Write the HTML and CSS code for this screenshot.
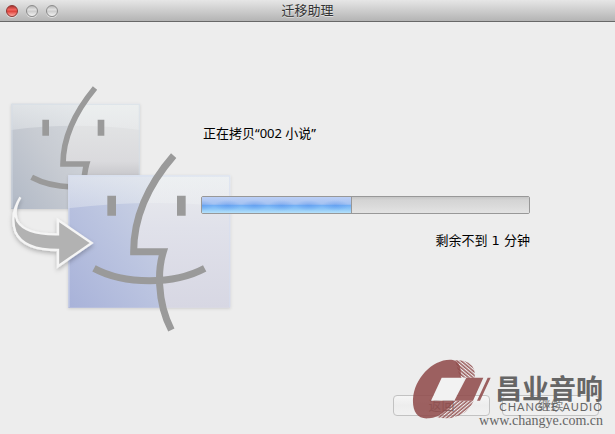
FILE: index.html
```html
<!DOCTYPE html>
<html lang="zh-CN">
<head>
    <meta charset="UTF-8">
    <meta name="viewport" content="width=device-width, initial-scale=1.0">
    <title>迁移助理</title>
    <link rel="stylesheet" href="styles.css">
</head>
<body>
    <div class="window">
        <header class="titlebar">
            <div class="window-controls">
                <button type="button" class="light light-close" aria-label="关闭"></button>
                <button type="button" class="light" aria-label="最小化"></button>
                <button type="button" class="light" aria-label="缩放"></button>
            </div>
            <h1 class="window-title">迁移助理</h1>
        </header>

        <main class="content">
            <svg class="artwork" viewBox="0 0 720 795" aria-hidden="true">
                <defs>
                    <linearGradient id="oldFace" x1="0" y1="1" x2="1" y2="0">
                        <stop offset="0" stop-color="#b1b9c6"/>
                        <stop offset="0.5" stop-color="#c7cbd2"/>
                        <stop offset="1" stop-color="#d6dade"/>
                    </linearGradient>
                    <linearGradient id="oldSide" x1="0" y1="0" x2="0" y2="1">
                        <stop offset="0" stop-color="#e6e8e8"/>
                        <stop offset="0.55" stop-color="#dadadd"/>
                        <stop offset="0.7" stop-color="#c5c5c9"/>
                    </linearGradient>
                    <linearGradient id="newFace" x1="0" y1="1" x2="1" y2="0">
                        <stop offset="0" stop-color="#a8b2d9"/>
                        <stop offset="0.5" stop-color="#bbc4e0"/>
                        <stop offset="1" stop-color="#d0d7e6"/>
                    </linearGradient>
                    <linearGradient id="newSide" x1="0" y1="0" x2="0" y2="1">
                        <stop offset="0" stop-color="#e9ebee"/>
                        <stop offset="0.4" stop-color="#e0e1ea"/>
                        <stop offset="1" stop-color="#d7d7e3"/>
                    </linearGradient>
                    <linearGradient id="gloss" x1="0" y1="0" x2="0" y2="1">
                        <stop offset="0" stop-color="#f0f3f4" stop-opacity="0.6"/>
                        <stop offset="1" stop-color="#f0f3f4" stop-opacity="0.35"/>
                    </linearGradient>
                    <filter id="shadow" x="-20%" y="-20%" width="140%" height="140%">
                        <feDropShadow dx="0" dy="3" stdDeviation="5" flood-color="#000000" flood-opacity="0.13"/>
                    </filter>
                    <filter id="arrowShadow" x="-20%" y="-20%" width="140%" height="140%">
                        <feDropShadow dx="0" dy="7" stdDeviation="6" flood-color="#000000" flood-opacity="0.25"/>
                    </filter>
                </defs>

                <!-- old computer -->
                <g filter="url(#shadow)">
                    <path d="M34 86H420V402H34Z" fill="url(#oldSide)"/>
                    <path d="M34 86H248Q190 170 188 268H260L252 402H34Z" fill="url(#oldFace)"/>
                    <path d="M34 86H420V165Q225 140 34 165Z" fill="url(#gloss)"/>
                    <path d="M36 400V88H418V400" fill="none" stroke="#d6dde6" stroke-width="4" opacity="0.6"/>
                </g>
                <g fill="none" stroke="#9a9a9a" stroke-width="17">
                    <path d="M285 39Q189 155 189 267H260Q252 294 251 340"/>
                    <path d="M95 307Q145 334 215 336"/>
                    <path d="M137 134V182M303 134V182" stroke-width="20"/>
                </g>

                <!-- new computer -->
                <g filter="url(#shadow)">
                    <path d="M205 301H691V698H205Z" fill="url(#newSide)"/>
                    <path d="M205 301H480Q405 410 401 529H492Q478 570 480 620Q482 665 490 698H205Z" fill="url(#newFace)"/>
                    <path d="M205 301H691V395Q450 370 205 400Z" fill="url(#gloss)"/>
                    <path d="M207 696V303H689V696" fill="none" stroke="#d6ddf0" stroke-width="4" opacity="0.6"/>
                </g>
                <g fill="none" stroke="#9a9a9a" stroke-width="21">
                    <path d="M521 242Q401 380 401 530H490Q476 575 479 630Q483 705 514 765"/>
                    <path d="M282 580Q350 617 448 617Q545 617 614 580"/>
                    <path d="M335 362V422M544 362V422" stroke-width="26"/>
                </g>

                <!-- transfer arrow -->
                <path d="M61 367Q38 405 52 438Q77 480 174 478V435L275 504L174 574V525Q70 525 46 470Q29 418 61 367Z" fill="#b2b2b2" stroke="#f5f5f5" stroke-width="7" filter="url(#arrowShadow)"/>
            </svg>

            <section class="transfer">
                <label class="status" for="copyProgress">正在拷贝“002 小说”</label>
                <progress class="progress" id="copyProgress" value="46" max="100"></progress>
                <p class="remaining">剩余不到 1 分钟</p>
            </section>
        </main>

        <footer class="actions">
            <button type="button" class="btn" disabled>返回</button>
            <button type="button" class="btn" disabled>继续</button>
        </footer>

        <div class="watermark">
            <svg class="watermark-logo" viewBox="21 25 240 183" aria-hidden="true">
                <defs>
                    <pattern id="hatch" width="8" height="8" patternUnits="userSpaceOnUse" patternTransform="rotate(40)">
                        <path d="M0 3H8" stroke="#914c4c" stroke-width="4"/>
                    </pattern>
                    <pattern id="hatchLow" width="8" height="8" patternUnits="userSpaceOnUse" patternTransform="rotate(-40)">
                        <path d="M0 3H8" stroke="#914c4c" stroke-width="4"/>
                    </pattern>
                </defs>
                <path d="M150 29Q195 25 208 58L210 81H165Z" fill="url(#hatch)"/>
                <path d="M148 150H206Q190 190 142 201Q118 205 94 199Z" fill="url(#hatchLow)"/>
                <path d="M110 81L78 150H148L180 81Z" fill="#f2f2f2"/>
                <path d="M143 28C162 31 170 50 167 81H110L78 150H148C130 178 104 199 72 203C38 207 22 183 24 145C28 82 86 22 143 28Z" fill="#914c4c" opacity="0.88"/>
                <path d="M184 81H235L204 150H148ZM248 81H257L225 150H216Z" fill="#914c4c" opacity="0.88"/>
            </svg>
            <div class="watermark-text">
                <strong class="watermark-name">昌业音响</strong>
                <span class="watermark-latin">CHANGYE AUDIO</span>
                <span class="watermark-url">www.changye.com.cn</span>
            </div>
        </div>
    </div>
</body>
</html>
```
FILE: styles.css
```css
* {
    margin: 0;
    padding: 0;
    box-sizing: border-box;
}

body {
    font-family: "Lucida Grande", "DejaVu Sans", "Noto Sans CJK SC", sans-serif;
    font-size: 13px;
    line-height: 18px;
    color: #000000;
    background: #ededed;
}

.window {
    position: relative;
    display: flex;
    flex-direction: column;
    min-height: 100vh;
}

/* Title bar */
.titlebar {
    display: grid;
    grid-template-columns: 1fr auto 1fr;
    align-items: center;
    height: 22px;
    padding: 0 6px;
    background: linear-gradient(#e6e6e6, #b4b4b4);
    border-bottom: 1px solid #686868;
}

.window-controls {
    display: flex;
    gap: 8px;
}

.light {
    width: 12px;
    height: 12px;
    border: 1px solid #8b8b8b;
    border-radius: 50%;
    background: linear-gradient(#b8b8b8, #dedede 35%, #cfcfcf 55%, #f2f2f2);
    box-shadow: 0 1px 0 #dedede;
}

.light-close {
    border-color: #8d3531;
    background: linear-gradient(#a83430, #f0625c 35%, #e0463f 55%, #ffaaa2);
}

.window-title {
    font-size: 13px;
    font-weight: 400;
    color: #333333;
    text-shadow: 0 1px 0 rgba(255, 255, 255, 0.5);
}

/* Content */
.content {
    display: grid;
    grid-template-columns: 201px 1fr;
    flex: 1;
    align-items: start;
}

.artwork {
    grid-area: 1 / 1;
    width: 240px;
    height: 265px;
    margin-top: 53px;
}

.transfer {
    grid-area: 1 / 2;
    z-index: 1;
    display: flex;
    flex-direction: column;
    padding: 102px 85px 0 0;
}

.status {
    padding-left: 2px;
    font-family: "Noto Sans", "Noto Sans CJK SC", sans-serif;
}

.progress {
    width: 100%;
    height: 18px;
    margin: 54px 0 18px;
    border: 1px solid #989898;
    border-radius: 2px;
    overflow: hidden;
    appearance: none;
}

.progress::-webkit-progress-bar {
    background: linear-gradient(#c6c6c6, #d4d4d4 20%, #d9d9d9 50%, #e3e3e3);
}

.progress::-webkit-progress-value {
    border-right: 1px solid #989898;
    background:
        radial-gradient(ellipse at 50% 50%, rgba(80, 140, 235, 0.4), rgba(80, 140, 235, 0) 70%) 12px 3px / 27px 11px repeat-x,
        linear-gradient(#bccff5, #a4c2f2 45%, #73b0f5 52%, #8dc6f8 75%, #b5e1fa);
}

.remaining {
    text-align: right;
}

/* Buttons */
.actions {
    display: flex;
    justify-content: flex-end;
    gap: 12px;
    padding: 0 16px 18px;
}

.btn {
    width: 97px;
    height: 21px;
    font: inherit;
    color: #7c7c7c;
    background: linear-gradient(#f5f5f5, #ededed 50%, #f1f1f1);
    border: 1px solid #c2c2c2;
    border-radius: 4px;
}

/* Watermark */
.watermark {
    position: absolute;
    right: 12px;
    bottom: 5px;
    display: flex;
    align-items: flex-start;
    color: #666666;
    pointer-events: none;
}

.watermark-logo {
    width: 80px;
    height: 61px;
    margin-top: 1px;
}

.watermark-text {
    display: flex;
    flex-direction: column;
    align-items: flex-end;
    margin-left: -13px;
    padding-top: 17px;
}

.watermark-name {
    font-family: "Noto Sans CJK SC", sans-serif;
    font-size: 27px;
    line-height: 26px;
    font-weight: 700;
}

.watermark-latin {
    font-family: Lato, sans-serif;
    font-size: 11px;
    line-height: 12px;
    letter-spacing: 1px;
}

.watermark-url {
    font-family: "Liberation Serif", serif;
    font-size: 14px;
    line-height: 16px;
}
```
